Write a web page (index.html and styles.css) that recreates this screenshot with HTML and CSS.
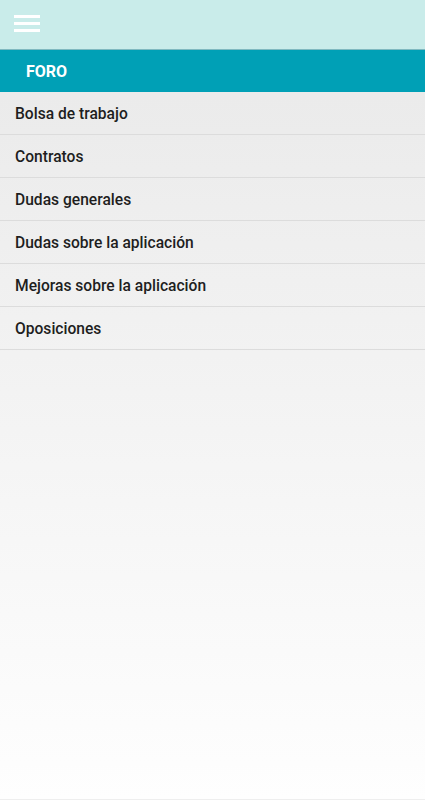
FILE: index.html
```html
<!DOCTYPE html>
<html lang="es">
<head>
<meta charset="utf-8">
<title>Foro</title>
<link rel="stylesheet" href="styles.css">
</head>
<body>
<div class="app">
  <header class="topbar">
    <button class="menu-btn" aria-label="Menú">
      <svg width="26" height="18" viewBox="0 0 26 18"><rect x="0" y="0" width="26" height="3" fill="#fff"/><rect x="0" y="7" width="26" height="3" fill="#fff"/><rect x="0" y="14" width="26" height="3" fill="#fff"/></svg>
    </button>
  </header>
  <div class="section-bar">FORO</div>
  <ul class="list">
    <li class="item">Bolsa de trabajo</li>
    <li class="item">Contratos</li>
    <li class="item">Dudas generales</li>
    <li class="item">Dudas sobre la aplicación</li>
    <li class="item">Mejoras sobre la aplicación</li>
    <li class="item">Oposiciones</li>
  </ul>
</div>
</body>
</html>
```

FILE: styles.css
```css
html, body {
  margin: 0;
  padding: 0;
}
body {
  font-family: Roboto, "Noto Sans", sans-serif;
  background: #fff;
}
.app {
  height: 799px;
  display: flex;
  flex-direction: column;
  background: linear-gradient(to bottom, #ebebeb 0%, #ebebeb 12%, #fefefe 100%);
  border-bottom: 1px solid #eeeeee;
}
.topbar {
  height: 49px;
  background: #c9ecea;
  border-bottom: 1px solid #7fb9c0;
  display: flex;
  align-items: center;
  padding-left: 14px;
}
.menu-btn {
  border: 0;
  background: none;
  padding: 0;
  margin-top: -1px;
  display: flex;
}
.section-bar {
  height: 42px;
  background: #00a0b6;
  color: #fff;
  font-weight: 700;
  font-size: 16px;
  display: flex;
  align-items: center;
  padding-left: 26px;
}
.list {
  list-style: none;
  margin: 0;
  padding: 0;
}
.item {
  height: 41px;
  padding-top: 1px;
  border-bottom: 1px solid #dcdcdc;
  display: flex;
  align-items: center;
  padding-left: 15px;
  font-size: 15.6px;
  font-weight: 500;
  color: #1e1e1e;
}
```
